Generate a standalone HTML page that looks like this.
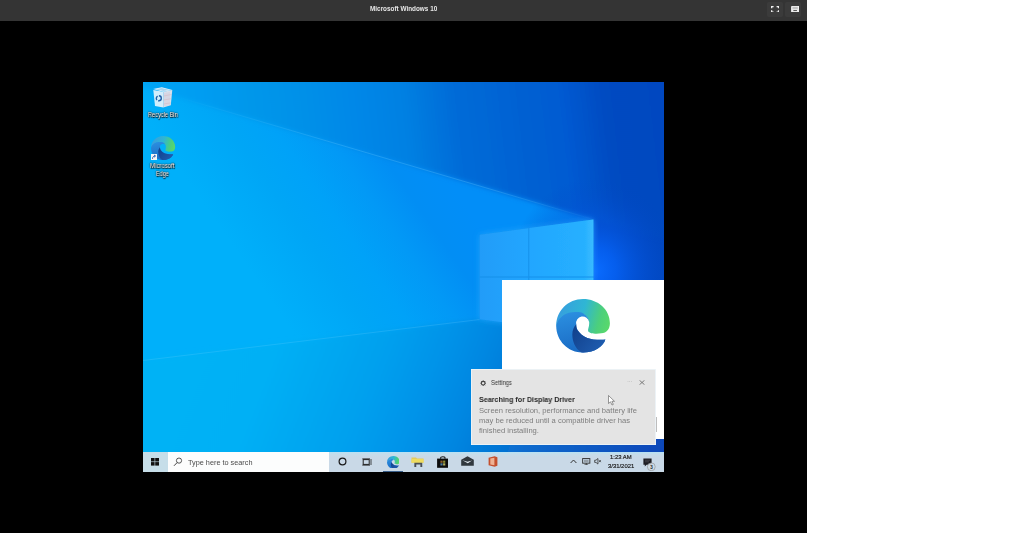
<!DOCTYPE html>
<html><head><meta charset="utf-8">
<style>
html,body{margin:0;padding:0;width:1024px;height:533px;overflow:hidden;background:#fff;font-family:"Liberation Sans",sans-serif;}
.abs{position:absolute;}
#frame{position:absolute;left:0;top:0;width:807px;height:533px;background:#000;}
#hdr{position:absolute;left:0;top:0;width:807px;height:21px;background:#343434;}
#title{position:absolute;left:369.5px;top:4px;font-size:7.5px;font-weight:bold;color:#e8e8e8;white-space:nowrap;transform-origin:0 0;}
.hbtn{position:absolute;top:2px;width:16px;height:15px;background:#3b3b3b;border-radius:2px;}
#desk{position:absolute;left:143px;top:81.5px;width:521px;height:390.5px;overflow:hidden;background:#0a90e8;}
.t{position:absolute;white-space:nowrap;transform-origin:0 0;will-change:transform;}
</style></head>
<body>
<div id="frame"></div>
<div id="hdr">
  <div id="title" style="transform:scaleX(0.85)">Microsoft Windows 10</div>
  <div class="hbtn" style="left:767px"></div>
  <div class="hbtn" style="left:785px"></div>
  <svg class="abs" style="left:770.5px;top:5.8px" width="8.2" height="6.6" viewBox="0 0 9 7.5"><path d="M0.6,2.6 V0.6 H2.8 M6.2,0.6 H8.4 V2.6 M8.4,4.9 V6.9 H6.2 M2.8,6.9 H0.6 V4.9" fill="none" stroke="#f0f0f0" stroke-width="1.5"/></svg>
  <svg class="abs" style="left:790.8px;top:5.8px" width="8.3" height="6.3" viewBox="0 0 9 7"><rect x="0" y="0" width="9" height="7" fill="#f0f0f0" rx="0.5"/><path d="M1.5,1.5 H7.5 M1.5,3 H7.5" stroke="#888" stroke-width="0.6"/><rect x="2.5" y="4.6" width="4" height="1" fill="#444"/></svg>
</div>
<div id="desk">
<svg class="abs" style="left:0;top:0" width="521" height="391" viewBox="0 0 521 391">
<defs>
<linearGradient id="gBase" x1="0" y1="35" x2="176.3" y2="-87.6" gradientUnits="userSpaceOnUse">
<stop offset="0" stop-color="#00b0fa"/><stop offset="0.302" stop-color="#00a6f6"/><stop offset="0.47" stop-color="#00a2f8"/><stop offset="0.651" stop-color="#0299f6"/><stop offset="0.814" stop-color="#028ef4"/><stop offset="1" stop-color="#028ef8"/>
</linearGradient>
<linearGradient id="gTop" x1="0" y1="40" x2="521" y2="-20" gradientUnits="userSpaceOnUse">
<stop offset="0" stop-color="#06a4f4"/><stop offset="0.113" stop-color="#039df2"/><stop offset="0.21" stop-color="#0497ea"/><stop offset="0.31" stop-color="#0490e8"/><stop offset="0.40" stop-color="#0088e8"/><stop offset="0.50" stop-color="#0080e2"/><stop offset="0.59" stop-color="#006cd8"/><stop offset="0.73" stop-color="#0560d2"/><stop offset="0.80" stop-color="#045ad2"/><stop offset="0.88" stop-color="#034bc1"/><stop offset="1" stop-color="#0446c0"/>
</linearGradient>
<linearGradient id="gLow" x1="0" y1="0" x2="577.5" y2="229.8" gradientUnits="userSpaceOnUse">
<stop offset="0" stop-color="#02b2f5"/><stop offset="0.218" stop-color="#02b2f5"/><stop offset="0.354" stop-color="#02b0f5"/><stop offset="0.52" stop-color="#02a0ee"/><stop offset="0.612" stop-color="#0392e8"/><stop offset="0.684" stop-color="#0385e0"/><stop offset="0.8" stop-color="#0868cc"/><stop offset="1" stop-color="#0846b8"/>
</linearGradient>
<radialGradient id="gGlow" cx="452" cy="190" r="85" gradientUnits="userSpaceOnUse" gradientTransform="translate(452 200) scale(1 1.1) translate(-452 -200)">
<stop offset="0" stop-color="#0a6cff" stop-opacity="1"/><stop offset="0.25" stop-color="#0662f5" stop-opacity="0.85"/><stop offset="1" stop-color="#0446c0" stop-opacity="0"/>
</radialGradient>
<linearGradient id="gLine" x1="30" y1="0" x2="450" y2="0" gradientUnits="userSpaceOnUse">
<stop offset="0" stop-color="#7fd4ff" stop-opacity="0"/><stop offset="0.4" stop-color="#6fccff" stop-opacity="0.3"/><stop offset="0.75" stop-color="#6fccff" stop-opacity="0.3"/><stop offset="1" stop-color="#6fccff" stop-opacity="0.05"/>
</linearGradient>
<filter id="blur2" x="-10%" y="-10%" width="120%" height="120%"><feGaussianBlur stdDeviation="2.4"/></filter>
<linearGradient id="gLogoL" x1="336" y1="0" x2="386" y2="0" gradientUnits="userSpaceOnUse"><stop offset="0" stop-color="#209cf8"/><stop offset="1" stop-color="#23a6ff"/></linearGradient>
<linearGradient id="gLogoR" x1="386" y1="0" x2="451" y2="0" gradientUnits="userSpaceOnUse"><stop offset="0" stop-color="#22a6ff"/><stop offset="0.85" stop-color="#26b0ff"/><stop offset="1" stop-color="#3cbcff"/></linearGradient>
<filter id="blurH" x="-20%" y="-20%" width="140%" height="140%"><feGaussianBlur stdDeviation="3"/></filter>
<filter id="blur1" x="-10%" y="-10%" width="120%" height="120%"><feGaussianBlur stdDeviation="0.6"/></filter>
</defs>
<rect x="0" y="0" width="521" height="391" fill="url(#gBase)"/>
<polygon points="450.4,110 531,110 531,270 450.4,252.5" fill="#0446c0" filter="url(#blur2)"/>
<polygon points="-10,-10 531,-10 531,160 450.4,137.5 -10,2" fill="url(#gTop)" filter="url(#blur2)"/>
<polygon points="-10,279 336.7,237.2 531,258 531,400 -10,400" fill="url(#gLow)" filter="url(#blur2)"/>
<rect x="360" y="60" width="170" height="300" fill="url(#gGlow)"/>
<line x1="0" y1="4.8" x2="450.4" y2="137.5" stroke="url(#gLine)" stroke-width="0.9"/>
<line x1="0" y1="278.5" x2="336.7" y2="237.5" stroke="#7fd6ff" stroke-opacity="0.22" stroke-width="0.9"/>
<polygon points="336.7,152.8 450.4,137.5 450.4,252.5 336.7,237.2" fill="#3ab8ff" fill-opacity="0.45" filter="url(#blurH)"/>
<polygon points="336.7,152.8 450.4,137.5 450.4,252.5 336.7,237.2" fill="#1590ea"/>
<g filter="url(#blur1)">
<polygon points="336.7,152.8 385.3,146.3 385.3,194.5 336.7,194.5" fill="url(#gLogoL)"/>
<polygon points="386.3,146.1 450.4,137.5 450.4,194.5 386.3,194.5" fill="url(#gLogoR)"/>
<polygon points="336.7,195.5 385.3,195.5 385.3,243.7 336.7,237.2" fill="url(#gLogoL)"/>
<polygon points="386.3,195.5 450.4,195.5 450.4,252.5 386.3,243.9" fill="url(#gLogoR)"/>
</g>
</svg>
</div>

<svg width="0" height="0" style="position:absolute">
<defs>
<linearGradient id="eA" x1="5" y1="30" x2="95" y2="55" gradientUnits="userSpaceOnUse">
<stop offset="0" stop-color="#36a0de"/><stop offset="0.45" stop-color="#2fb6d4"/><stop offset="0.8" stop-color="#4ccf7c"/><stop offset="1" stop-color="#58d86c"/>
</linearGradient>
<linearGradient id="eB" x1="15" y1="25" x2="30" y2="100" gradientUnits="userSpaceOnUse">
<stop offset="0" stop-color="#2b8fe0"/><stop offset="1" stop-color="#1a6bc4"/>
</linearGradient>
<linearGradient id="eC" x1="35" y1="55" x2="85" y2="95" gradientUnits="userSpaceOnUse">
<stop offset="0" stop-color="#12428e"/><stop offset="1" stop-color="#1f5db0"/>
</linearGradient>
<symbol id="edge" viewBox="0 0 100 100">
<path d="M0,50 C0,22 22,0 50,0 C78,0 100,20 100,45 C100,56 94,63 84,64 C74,65.5 62,64.5 59.5,60 C58.5,57 61.4,52 61.4,46 L61.4,42.7 C60.5,38 56,31 50.6,28.5 C45,26 40,26 36,26 C27,26 20,28 14,32 C7,37 2,43 0,52 Z" fill="url(#eA)"/>
<path d="M0,50 C2,41 7,35 14,30 C20,26 27,24.4 36,24.4 C40,24.4 45,24 50.6,26.8 C57,30 61,37 61.4,42.7 A12.2 12.2 0 0 0 37.3,47 C37.3,52 38,55 40,58 C44,64 50,69.5 58,72.5 C66,75.5 80,76.5 91.6,75.6 C88,88 72,100 50,100 C22,100 0,78 0,50 Z" fill="url(#eB)"/>
<path d="M37.3,47 C33,52 30,58 30,66 C30,78 35,92 47,99.5 L50,100 C72,100 88,88 91.6,75.6 C80,76.5 66,75.5 58,72.5 C50,69.5 44,64 40,58 C38,55 37.3,52 37.3,47 Z" fill="url(#eC)"/>
</symbol>
</defs>
</svg>
<!-- desktop icons -->
<svg class="abs" style="left:152px;top:86px" width="22" height="23" viewBox="0 0 22 23">
<path d="M1.3,4 L11.3,5.8 L11.3,21.5 L3,20 Z" fill="#e4f3fb" fill-opacity="0.92"/>
<path d="M11.3,5.8 L20.3,3.9 L18.8,19.3 L11.3,21.5 Z" fill="#e9e4ea" fill-opacity="0.92"/>
<path d="M13,7 V20 M15,6.6 V19.7 M17,6.2 V19.3 M11.5,10 L19.6,8.5 M11.5,14 L19.2,12.7 M11.5,18 L18.9,16.9" stroke="#d2a8b4" stroke-width="0.45" stroke-opacity="0.8"/>
<path d="M1.1,3.1 L9.8,1.3 L20.3,3.9 L11.3,5.8 Z" fill="#f4fbff" fill-opacity="0.95"/>
<path d="M3.2,3.2 L9.8,1.9 L17.8,3.9 L11.3,5.1 Z" fill="#a9d4ee"/>
<circle cx="6.8" cy="12.3" r="2.5" fill="none" stroke="#2160a8" stroke-width="1.4" stroke-dasharray="4.5 1.3"/>
</svg>
<div class="t" style="left:148px;top:112.2px;font-size:6.7px;line-height:1;color:#fff;text-shadow:0 0 1px #000,0 0 2px rgba(0,0,0,0.9),0.4px 0.6px 1px #000;transform:scaleX(0.845)">Recycle Bin</div>
<svg class="abs" style="left:150.2px;top:135.6px" width="26.2" height="24.2"><use href="#edge" width="26.2" height="24.2"/></svg>
<div class="abs" style="left:151.3px;top:154px;width:5.5px;height:5.5px;background:#f4f4f4;"></div>
<svg class="abs" style="left:151.3px;top:154px" width="6" height="6" viewBox="0 0 6 6"><path d="M1.5,4.8 C1.5,3 2.5,2 4.2,2 M3,1 L4.5,2 L3.2,3.2" fill="none" stroke="#1d56b0" stroke-width="0.9"/></svg>
<div class="t" style="left:150.3px;top:162.6px;font-size:6.3px;line-height:1;color:#fff;text-shadow:0 0 1px #000,0 0 2px rgba(0,0,0,0.9),0.4px 0.6px 1px #000;transform:scaleX(0.96)">Microsoft</div>
<div class="t" style="left:155.8px;top:170.5px;font-size:6.3px;line-height:1;color:#fff;text-shadow:0 0 1px #000,0 0 2px rgba(0,0,0,0.9),0.4px 0.6px 1px #000;transform:scaleX(0.87)">Edge</div>

<!-- splash -->
<div class="abs" style="left:501.5px;top:280.3px;width:162.5px;height:158.6px;background:#fff;"></div>
<svg class="abs" style="left:555.6px;top:298.9px" width="54.1" height="53.7"><use href="#edge" width="54.1" height="53.7"/></svg>

<!-- toast -->
<div class="abs" style="left:470.6px;top:368.6px;width:185.6px;height:76.6px;background:#e4e4e4;box-shadow:inset 0 0 0 0.8px #eef6fa;"></div>
<svg class="abs" style="left:479.8px;top:379.6px" width="6.4" height="6.4" viewBox="0 0 8 8">
<circle cx="4" cy="4" r="2.3" fill="none" stroke="#444" stroke-width="1.3"/>
<path d="M4,0.5 V2 M4,6 V7.5 M0.5,4 H2 M6,4 H7.5 M1.5,1.5 L2.6,2.6 M5.4,5.4 L6.5,6.5 M6.5,1.5 L5.4,2.6 M2.6,5.4 L1.5,6.5" stroke="#444" stroke-width="1.1"/>
</svg>
<div class="t" style="left:490.8px;top:380.1px;font-size:6.3px;line-height:1;color:#333;transform:scaleX(0.92)">Settings</div>
<div class="t" style="left:627px;top:378px;font-size:6px;line-height:1;color:#9a9a9a;letter-spacing:-0.3px">···</div>
<svg class="abs" style="left:639px;top:379.5px" width="6" height="5" viewBox="0 0 6 5"><path d="M0.5,0.3 L5.5,4.7 M5.5,0.3 L0.5,4.7" stroke="#666" stroke-width="0.8"/></svg>
<div class="t" style="left:479.4px;top:396.15px;font-size:7.5px;line-height:1;color:#262626;font-weight:bold;transform:scaleX(0.95)">Searching for Display Driver</div>
<div class="t" style="left:479.1px;top:406.9px;font-size:7.6px;line-height:1;color:#7d7d7d;">Screen resolution, performance and battery life</div>
<div class="t" style="left:479.1px;top:417px;font-size:7.6px;line-height:1;color:#7d7d7d;">may be reduced until a compatible driver has</div>
<div class="t" style="left:479.1px;top:427.1px;font-size:7.6px;line-height:1;color:#7d7d7d;">finished installing.</div>
<div class="abs" style="left:656.2px;top:417px;width:0.8px;height:15px;background:#bdbdbd;"></div>
<!-- cursor -->
<svg class="abs" style="left:607.5px;top:395px" width="8" height="11" viewBox="0 0 8 11"><path d="M0.5,0.5 L0.5,8.5 L2.5,6.8 L4,10 L5.3,9.4 L3.9,6.3 L6.5,6.3 Z" fill="#fff" stroke="#555" stroke-width="0.6"/></svg>

<!-- taskbar -->
<div class="abs" style="left:143px;top:451.5px;width:521px;height:20.5px;background:linear-gradient(#b8e2f4 0,#c6dcea 2.5px,#c9d9e7 5px);"></div>
<div class="abs" style="left:143px;top:451.5px;width:24.7px;height:20.5px;background:#c6dee9;"></div>
<svg class="abs" style="left:151.2px;top:458.2px" width="8" height="7.6" viewBox="0 0 8 7.6">
<rect x="0" y="0" width="3.6" height="3.5" fill="#111"/><rect x="4.2" y="0" width="3.8" height="3.5" fill="#111"/>
<rect x="0" y="4.1" width="3.6" height="3.5" fill="#111"/><rect x="4.2" y="4.1" width="3.8" height="3.5" fill="#111"/>
</svg>
<div class="abs" style="left:167.7px;top:451.5px;width:161.8px;height:20.5px;background:#fcfdfd;"></div>
<svg class="abs" style="left:173px;top:457px" width="10" height="10" viewBox="0 0 10 10"><circle cx="6" cy="3.6" r="2.6" fill="none" stroke="#444" stroke-width="0.9"/><path d="M4.2,5.5 L1,8.8" stroke="#444" stroke-width="1"/></svg>
<div class="t" style="left:188.2px;top:458.6px;font-size:7.3px;line-height:1;color:#4a4a4a;transform:scaleX(1.0)">Type here to search</div>
<svg class="abs" style="left:338px;top:457.2px" width="9" height="9" viewBox="0 0 9 9"><circle cx="4.5" cy="4.5" r="3.4" fill="none" stroke="#1a1a1a" stroke-width="1.2"/></svg>
<svg class="abs" style="left:362px;top:458px" width="10" height="8" viewBox="0 0 10 8"><rect x="1.2" y="1.6" width="6" height="4.8" fill="none" stroke="#222" stroke-width="1"/><path d="M0.3,0.8 H8 M0.3,7.2 H8 M9,1 V7" stroke="#222" stroke-width="0.8"/></svg>
<div class="abs" style="left:383.4px;top:471px;width:19.6px;height:1px;background:#3a5f8a;"></div>
<svg class="abs" style="left:386.5px;top:455.6px" width="12.7" height="12.7"><use href="#edge" width="12.7" height="12.7"/></svg>
<svg class="abs" style="left:409.5px;top:455.5px" width="15" height="12" viewBox="0 0 15 12">
<path d="M1.5,1.5 H6 L7,2.5 H13.5 V6.8 H1.5 Z" fill="#e8c848" fill-opacity="0.85"/><rect x="1.5" y="3" width="12" height="3.8" fill="#eedc60"/>
<path d="M5.3,11 V7.6 H11.3 V11" fill="none" stroke="#4a5056" stroke-width="1.9"/>
</svg>
<svg class="abs" style="left:436.6px;top:455.8px" width="11.6" height="12" viewBox="0 0 11.6 12">
<path d="M3.6,2.8 V1.8 C3.6,0.4 8,0.4 8,1.8 V2.8" fill="none" stroke="#1a1a1a" stroke-width="1.1"/>
<rect x="0.1" y="2.6" width="11.4" height="9.2" fill="#0c0c0c"/>
<rect x="3.4" y="4.6" width="2.2" height="2.2" fill="#8a5a28"/><rect x="6.1" y="4.6" width="2.2" height="2.2" fill="#8a8a30"/>
<rect x="3.4" y="7.3" width="2.2" height="2.2" fill="#4a7aa0"/><rect x="6.1" y="7.3" width="2.2" height="2.2" fill="#b0b060"/>
</svg>
<svg class="abs" style="left:461.3px;top:456.2px" width="13" height="10" viewBox="0 0 13 10">
<path d="M0.2,3.8 L6.5,0.2 L12.8,3.8 V9.8 H0.2 Z" fill="#30383e"/>
<path d="M1.5,4.2 L6.5,5.8 L11,4.6 L6.8,7.2 Z" fill="#e6eef4"/>
</svg>
<svg class="abs" style="left:488px;top:456.2px" width="10" height="11" viewBox="0 0 10 11">
<path d="M0.6,1.8 L6.6,0.3 L9.4,1.2 V9.8 L6.6,10.7 L0.6,9.2 Z" fill="#c4502e"/>
<path d="M2.3,2.4 L6.4,1.7 V9.3 L2.3,8.6 Z" fill="#eeb294"/>
</svg>
<svg class="abs" style="left:570px;top:458.8px" width="7" height="4.5" viewBox="0 0 7 4.5"><path d="M0.6,4 L3.5,1 L6.4,4" fill="none" stroke="#333" stroke-width="1"/></svg>
<svg class="abs" style="left:582px;top:458.1px" width="8.5" height="7.4" viewBox="0 0 9 8"><rect x="0.6" y="0.6" width="7.8" height="5" fill="none" stroke="#333" stroke-width="1"/><rect x="2" y="1.8" width="5" height="2.6" fill="#333" opacity="0.35"/><path d="M4.5,5.6 V7.4 M2.5,7.5 H6.5" stroke="#333" stroke-width="1"/></svg>
<svg class="abs" style="left:594px;top:458.4px" width="7.5" height="6.6" viewBox="0 0 8 7.5"><path d="M0.5,2.5 H2 L4.2,0.6 V6.9 L2,5 H0.5 Z" fill="none" stroke="#333" stroke-width="0.9"/><path d="M5.5,2.5 L7.5,4.7 M7.5,2.5 L5.5,4.7" stroke="#333" stroke-width="0.9"/></svg>
<div class="t" style="left:610.3px;top:454.7px;font-size:5.9px;line-height:1;color:#1a1a1a;-webkit-text-stroke:0.18px #1a1a1a;">1:23 AM</div>
<div class="t" style="left:607.8px;top:464.1px;font-size:5.9px;line-height:1;color:#1a1a1a;-webkit-text-stroke:0.18px #1a1a1a;">3/31/2021</div>
<svg class="abs" style="left:643px;top:457.5px" width="14" height="13" viewBox="0 0 14 13">
<path d="M0.4,0.4 H8.6 V6.8 H3.6 L1.8,8.4 V6.8 H0.4 Z" fill="#1e1e24"/>
<path d="M2,2.2 H7 M2,3.8 H6" stroke="#5a5a60" stroke-width="0.6"/>
<circle cx="8.3" cy="8.8" r="3.9" fill="#cfdbe6" fill-opacity="0.9" stroke="#8a8a8a" stroke-width="0.6"/>
<text x="8.5" y="10.6" font-size="4.6" text-anchor="middle" fill="#222" font-family="Liberation Sans" font-weight="bold">3</text>
</svg>
</body></html>
